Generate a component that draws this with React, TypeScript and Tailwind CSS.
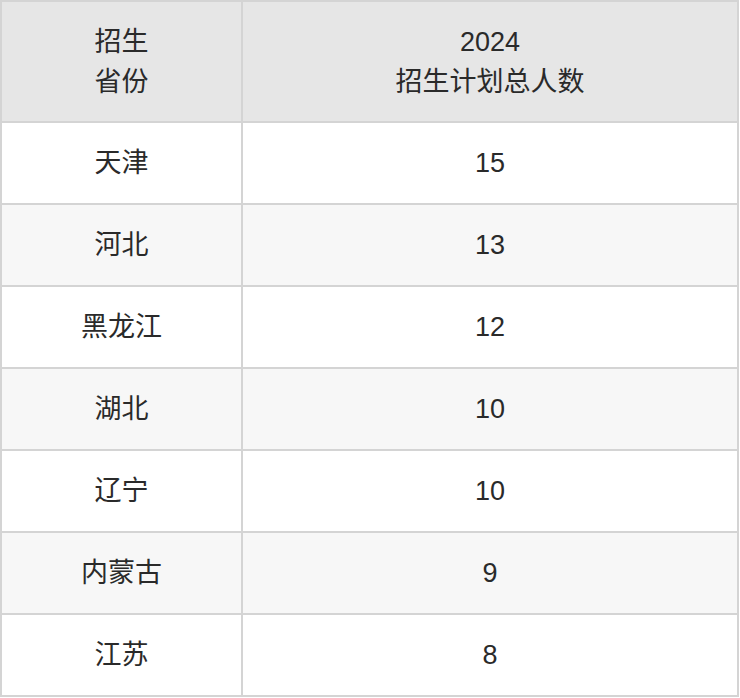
import React from "react";

const rows: [string, string][] = [
  ["天津", "15"],
  ["河北", "13"],
  ["黑龙江", "12"],
  ["湖北", "10"],
  ["辽宁", "10"],
  ["内蒙古", "9"],
  ["江苏", "8"],
];

export default function App() {
  return (
    <div
      className="w-[740px] h-[698px] bg-white text-[#2a2a2a] text-[27px]"
      style={{ fontFamily: '"Liberation Sans", "Noto Sans CJK SC", sans-serif' }}
    >
      <table className="w-[739px] border-separate border-spacing-0 border border-[#d4d4d4]">
        <colgroup>
          <col className="w-[241px]" />
          <col />
        </colgroup>
        <thead>
          <tr className="bg-[#e6e6e6]">
            <th className="h-[121px] border border-[#d4d4d4] font-normal leading-[40px] text-center">
              招生
              <br />
              省份
            </th>
            <th className="h-[121px] border border-[#d4d4d4] font-normal leading-[40px] text-center">
              2024
              <br />
              招生计划总人数
            </th>
          </tr>
        </thead>
        <tbody>
          {rows.map(([p, n], i) => (
            <tr key={i} className={i % 2 === 1 ? "bg-[#f7f7f7]" : "bg-white"}>
              <td className="h-[82px] border border-[#d4d4d4] text-center leading-[40px]">{p}</td>
              <td className="h-[82px] border border-[#d4d4d4] text-center leading-[40px]">{n}</td>
            </tr>
          ))}
        </tbody>
      </table>
    </div>
  );
}
